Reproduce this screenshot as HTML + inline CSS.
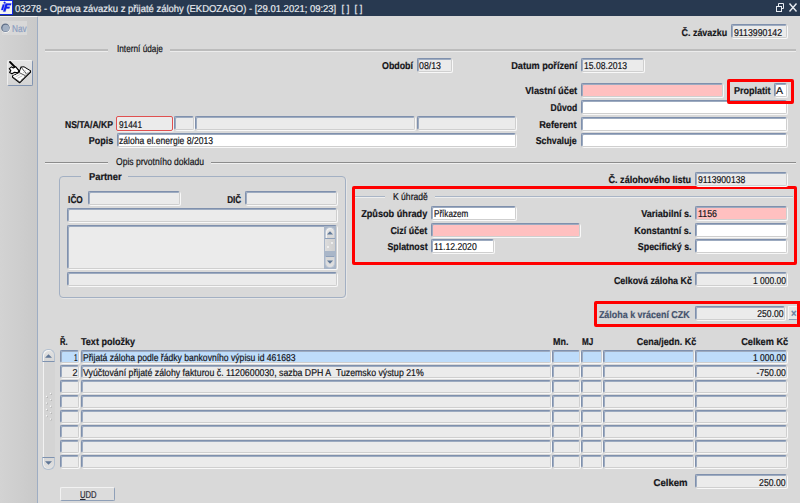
<!DOCTYPE html>
<html><head><meta charset="utf-8"><style>
html,body{margin:0;padding:0;width:800px;height:503px;overflow:hidden;background:#d9d9d9;font-family:"Liberation Sans", sans-serif;}
body>div,body>svg{position:absolute;}
.t{white-space:nowrap;text-rendering:geometricPrecision;-webkit-text-stroke:0.2px currentColor;}
.f{border-top:1px solid #7f90ad;border-left:1px solid #7f90ad;border-right:1px solid #cfcfcf;border-bottom:1px solid #cfcfcf;border-radius:2px;box-shadow:1px 1px 0 #f8f8f8, inset 1px 1px 0 #9dabc0;}
</style></head><body>
<div style="left:0px;top:0px;width:800px;height:16px;background:#283950"></div>
<svg style="left:0;top:0" width="14" height="16" viewBox="0 0 14 16"><rect x="0" y="0" width="13" height="15" fill="#1428e6"/><rect x="0" y="1" width="12" height="13" fill="#f4f4ee"/><g fill="#1020f0" stroke="#1020f0" stroke-width="0.3" stroke-linejoin="round"><circle cx="4.6" cy="2.6" r="0.9"/><path d="M1.2 10 L3 10 L4.6 4.4 L2.8 4.4 Z"/><path d="M3.2 11.6 L5.4 11.6 L6.3 8.4 L9.3 8.4 L9.8 6.8 L6.8 6.8 L7.3 5.2 L10.8 5.2 L11.3 3.5 L5.6 3.5 Z"/></g></svg>
<svg style="left:774px;top:2px" width="24" height="11" viewBox="0 0 24 11"><g fill="none" stroke="#e8ecf2" stroke-width="1"><rect x="2.5" y="4.5" width="5" height="5"/><path d="M4.5 4.5V1.5h5v5h-2"/><path d="M15.5 1.5l7 8M22.5 1.5l-7 8" stroke-width="1.4"/></g></svg>
<div style="left:0px;top:16px;width:37px;height:487px;background:linear-gradient(90deg,#d3d3d3,#c9c9c9)"></div>
<div style="left:0px;top:16px;width:37px;height:1px;background:#f2f2f2"></div>
<div style="left:37px;top:17px;width:1px;height:486px;background:#9eadc3"></div>
<div style="left:2px;top:21px;width:25px;height:14px;background:#d8d8d8"></div>
<svg style="left:0;top:22px" width="12" height="12"><circle cx="5.8" cy="6.3" r="4.6" fill="#f2f2f2"/><circle cx="5.4" cy="5.8" r="4.3" fill="#5f6e86"/><circle cx="5.8" cy="6.2" r="3.4" fill="#a2b0c3"/></svg>
<div style="left:7px;top:60px;width:24px;height:24px;border:1px solid #eeeeee;border-right-color:#8294b0;border-bottom-color:#8294b0;border-radius:2px;background:linear-gradient(#e4e4e4,#d4d4d4)"></div>
<div style="left:7px;top:60px"><svg width="26" height="26" viewBox="0 0 26 26" style="display:block"><g stroke="#000" stroke-linejoin="round" stroke-linecap="round"><path d="M5.5 16 L12 12.5 L14 7 L17 6.8 L23.2 10.6 L12.8 21.2 Z" fill="#fff" stroke-width="1"/><path d="M5.5 16 L5.6 17.3 L12.6 22.8 L23.6 12 L23.2 10.6" fill="#fff" stroke-width="1.1"/><path d="M6.5 17.5 L12.7 21.9 L23 11.6" fill="none" stroke="#444" stroke-width="0.7" stroke-dasharray="0.8 0.6"/><path d="M12 12.5 L18 15.5 M14 7 L19.5 14" fill="none" stroke="#222" stroke-width="0.8"/><path d="M9 16.5 L13 14.5 M11 18 L15 16 M16.5 12.5 L19 10.5 M18 14.5 L21 12" fill="none" stroke="#aaa" stroke-width="0.7"/><path d="M3 2 L12.2 11.3" stroke-width="1.8" fill="none"/><path d="M2.3 8.6 L4.6 6.9 L6.3 8 L8.6 6.7 L12 10.8 L10.8 12.8 L7.5 12.3 L5 13.8 L2.6 12.4 L3.8 10.6 Z" fill="#fff" stroke-width="1.1"/></g></svg></div>
<div class="f" style="left:731px;top:24px;width:54px;height:12px;background:#ebebeb;"></div>
<div style="left:45px;top:49px;width:63px;height:2px;background:#bcbcbc"></div>
<div style="left:45px;top:51px;width:63px;height:1px;background:#ececec"></div>
<div style="left:170px;top:49px;width:626px;height:2px;background:#bcbcbc"></div>
<div style="left:170px;top:51px;width:626px;height:1px;background:#ececec"></div>
<div class="f" style="left:417px;top:58px;width:33px;height:12px;background:#ebebeb;"></div>
<div class="f" style="left:581px;top:58px;width:61px;height:12px;background:#ebebeb;"></div>
<div class="f" style="left:581px;top:83px;width:140px;height:12px;background:#ffc0c0;"></div>
<div class="f" style="left:581px;top:100px;width:204px;height:12px;background:#ffffff;"></div>
<div class="f" style="left:581px;top:117px;width:204px;height:12px;background:#ffffff;"></div>
<div class="f" style="left:581px;top:133px;width:204px;height:12px;background:#ffffff;"></div>
<div style="left:727px;top:79px;width:61px;height:19px;border:3px solid #ff0000;border-radius:2px"></div>
<div class="f" style="left:774px;top:83px;width:11px;height:12px;background:#ffffff;"></div>
<div style="left:116px;top:116px;width:55px;height:13px;background:#ebebeb;border:1px solid #e05050;border-radius:2px;box-shadow:1px 1px 0 #f0f0f0"></div>
<div class="f" style="left:174px;top:116px;width:18px;height:12px;background:#ebebeb;"></div>
<div class="f" style="left:195px;top:116px;width:218px;height:12px;background:#ebebeb;"></div>
<div class="f" style="left:417px;top:116px;width:97px;height:12px;background:#ebebeb;"></div>
<div class="f" style="left:117px;top:133px;width:397px;height:12px;background:#ffffff;"></div>
<div style="left:45px;top:162px;width:63px;height:1px;background:#8c8c8c"></div>
<div style="left:45px;top:163px;width:63px;height:1px;background:#f0f0f0"></div>
<div style="left:211px;top:162px;width:585px;height:1px;background:#8c8c8c"></div>
<div style="left:211px;top:163px;width:585px;height:1px;background:#f0f0f0"></div>
<div style="left:59px;top:176px;width:285px;height:120px;border:1px solid #a3b0c3;border-radius:4px;box-shadow:1px 1px 0 #e6e6e6"></div>
<div style="left:81px;top:170px;width:47px;height:10px;background:#d9d9d9"></div>
<div class="f" style="left:88px;top:191px;width:90px;height:12px;background:#ebebeb;"></div>
<div class="f" style="left:245px;top:191px;width:90px;height:12px;background:#ebebeb;"></div>
<div class="f" style="left:67px;top:208px;width:268px;height:12px;background:#ebebeb;"></div>
<div class="f" style="left:67px;top:225px;width:268px;height:42px;background:#ebebeb;"></div>
<div class="f" style="left:67px;top:272px;width:268px;height:12px;background:#ebebeb;"></div>
<div style="left:324px;top:226px;width:12px;height:43px;background:#a9b6c8"></div>
<div style="left:325px;top:227px;width:10px;height:11px;background:linear-gradient(#e6e6e6,#d6d6d6);border:1px solid #c0c9d6;border-bottom:0;border-radius:5px 5px 0 0;box-sizing:border-box;box-shadow:inset 1px 1px 0 #f4f4f4"></div>
<svg style="left:327px;top:231px" width="6" height="4"><path d="M0 3.5L3 0.3 6 3.5z" fill="#5f7898"/></svg>
<div style="left:325px;top:238px;width:10px;height:13px;background:linear-gradient(90deg,#dcdcdc,#cfcfcf);border-top:1px solid #8ea0ba;box-sizing:border-box"></div>
<svg style="left:326px;top:241px" width="8" height="8"><circle cx="6" cy="2" r="0.9" fill="#fafafa"/><circle cx="2" cy="6" r="0.9" fill="#fafafa"/></svg>
<div style="left:325px;top:256px;width:10px;height:12px;background:linear-gradient(#d6d6d6,#e2e2e2);border:1px solid #c0c9d6;border-top:1px solid #8ea0ba;border-radius:0 0 5px 5px;box-sizing:border-box"></div>
<svg style="left:327px;top:260px" width="6" height="4"><path d="M0 0.5L3 3.7 6 0.5z" fill="#5f7898"/></svg>
<div style="left:352px;top:186px;width:439px;height:73px;border:3px solid #ff0000;border-radius:2px"></div>
<div style="left:355px;top:196px;width:30px;height:1px;background:#a9b5c6"></div>
<div style="left:355px;top:197px;width:30px;height:1px;background:#eeeeee"></div>
<div style="left:435px;top:196px;width:358px;height:1px;background:#a9b5c6"></div>
<div style="left:435px;top:197px;width:358px;height:1px;background:#eeeeee"></div>
<div class="f" style="left:431px;top:206px;width:83px;height:12px;background:#ffffff;"></div>
<div class="f" style="left:431px;top:223px;width:147px;height:12px;background:#ffc0c0;"></div>
<div class="f" style="left:431px;top:239px;width:61px;height:12px;background:#ffffff;"></div>
<div class="f" style="left:695px;top:172px;width:90px;height:12px;background:#ebebeb;"></div>
<div class="f" style="left:695px;top:206px;width:90px;height:12px;background:#ffc0c0;"></div>
<div class="f" style="left:695px;top:223px;width:90px;height:12px;background:#ffffff;"></div>
<div class="f" style="left:695px;top:239px;width:90px;height:12px;background:#ffffff;"></div>
<div class="f" style="left:695px;top:272px;width:90px;height:12px;background:#ebebeb;"></div>
<div style="left:594px;top:301px;width:200px;height:20px;border:3px solid #ff0000;border-radius:2px 0 0 2px"></div>
<div class="f" style="left:695px;top:306px;width:88px;height:12px;background:#ebebeb;"></div>
<div style="left:788px;top:306px;width:8px;height:12px;background:#e6e6e6;border-left:1px solid #f6f6f6;border-top:1px solid #f6f6f6;border-bottom:1px solid #8a9cb6;border-radius:1px"></div>
<div class="f" style="left:60px;top:350px;width:17px;height:11px;background:#bedcfa;"></div>
<div class="f" style="left:81px;top:350px;width:468px;height:11px;background:#bedcfa;"></div>
<div class="f" style="left:552px;top:350px;width:26px;height:11px;background:#bedcfa;"></div>
<div class="f" style="left:581px;top:350px;width:19px;height:11px;background:#bedcfa;"></div>
<div class="f" style="left:603px;top:350px;width:89px;height:11px;background:#bedcfa;"></div>
<div class="f" style="left:695px;top:350px;width:90px;height:11px;background:#bedcfa;"></div>
<div class="f" style="left:60px;top:365px;width:17px;height:11px;background:#ebebeb;"></div>
<div class="f" style="left:81px;top:365px;width:468px;height:11px;background:#ebebeb;"></div>
<div class="f" style="left:552px;top:365px;width:26px;height:11px;background:#ebebeb;"></div>
<div class="f" style="left:581px;top:365px;width:19px;height:11px;background:#ebebeb;"></div>
<div class="f" style="left:603px;top:365px;width:89px;height:11px;background:#ebebeb;"></div>
<div class="f" style="left:695px;top:365px;width:90px;height:11px;background:#ebebeb;"></div>
<div class="f" style="left:60px;top:380px;width:17px;height:11px;background:#ebebeb;"></div>
<div class="f" style="left:81px;top:380px;width:468px;height:11px;background:#ebebeb;"></div>
<div class="f" style="left:552px;top:380px;width:26px;height:11px;background:#ebebeb;"></div>
<div class="f" style="left:581px;top:380px;width:19px;height:11px;background:#ebebeb;"></div>
<div class="f" style="left:603px;top:380px;width:89px;height:11px;background:#ebebeb;"></div>
<div class="f" style="left:695px;top:380px;width:90px;height:11px;background:#ebebeb;"></div>
<div class="f" style="left:60px;top:395px;width:17px;height:11px;background:#ebebeb;"></div>
<div class="f" style="left:81px;top:395px;width:468px;height:11px;background:#ebebeb;"></div>
<div class="f" style="left:552px;top:395px;width:26px;height:11px;background:#ebebeb;"></div>
<div class="f" style="left:581px;top:395px;width:19px;height:11px;background:#ebebeb;"></div>
<div class="f" style="left:603px;top:395px;width:89px;height:11px;background:#ebebeb;"></div>
<div class="f" style="left:695px;top:395px;width:90px;height:11px;background:#ebebeb;"></div>
<div class="f" style="left:60px;top:410px;width:17px;height:11px;background:#ebebeb;"></div>
<div class="f" style="left:81px;top:410px;width:468px;height:11px;background:#ebebeb;"></div>
<div class="f" style="left:552px;top:410px;width:26px;height:11px;background:#ebebeb;"></div>
<div class="f" style="left:581px;top:410px;width:19px;height:11px;background:#ebebeb;"></div>
<div class="f" style="left:603px;top:410px;width:89px;height:11px;background:#ebebeb;"></div>
<div class="f" style="left:695px;top:410px;width:90px;height:11px;background:#ebebeb;"></div>
<div class="f" style="left:60px;top:425px;width:17px;height:11px;background:#ebebeb;"></div>
<div class="f" style="left:81px;top:425px;width:468px;height:11px;background:#ebebeb;"></div>
<div class="f" style="left:552px;top:425px;width:26px;height:11px;background:#ebebeb;"></div>
<div class="f" style="left:581px;top:425px;width:19px;height:11px;background:#ebebeb;"></div>
<div class="f" style="left:603px;top:425px;width:89px;height:11px;background:#ebebeb;"></div>
<div class="f" style="left:695px;top:425px;width:90px;height:11px;background:#ebebeb;"></div>
<div class="f" style="left:60px;top:440px;width:17px;height:11px;background:#ebebeb;"></div>
<div class="f" style="left:81px;top:440px;width:468px;height:11px;background:#ebebeb;"></div>
<div class="f" style="left:552px;top:440px;width:26px;height:11px;background:#ebebeb;"></div>
<div class="f" style="left:581px;top:440px;width:19px;height:11px;background:#ebebeb;"></div>
<div class="f" style="left:603px;top:440px;width:89px;height:11px;background:#ebebeb;"></div>
<div class="f" style="left:695px;top:440px;width:90px;height:11px;background:#ebebeb;"></div>
<div class="f" style="left:60px;top:455px;width:17px;height:11px;background:#ebebeb;"></div>
<div class="f" style="left:81px;top:455px;width:468px;height:11px;background:#ebebeb;"></div>
<div class="f" style="left:552px;top:455px;width:26px;height:11px;background:#ebebeb;"></div>
<div class="f" style="left:581px;top:455px;width:19px;height:11px;background:#ebebeb;"></div>
<div class="f" style="left:603px;top:455px;width:89px;height:11px;background:#ebebeb;"></div>
<div class="f" style="left:695px;top:455px;width:90px;height:11px;background:#ebebeb;"></div>
<div style="left:43px;top:361px;width:12px;height:97px;background:#d4d4d4;border-left:1px solid #f2f2f2;box-sizing:border-box"></div>
<div style="left:42px;top:349px;width:13px;height:13px;background:linear-gradient(#e2e2e2,#d6d6d6);border:1px solid #b3c0d0;border-bottom:1px solid #7f93b0;border-radius:6px 6px 0 0;box-sizing:border-box;box-shadow:inset 1px 1px 0 #f4f4f4"></div>
<svg style="left:45px;top:354px" width="7" height="4"><path d="M0 3.8L3.5 0.2 7 3.8z" fill="#5f7696"/></svg>
<div style="left:42px;top:457px;width:13px;height:13px;background:linear-gradient(#d6d6d6,#e2e2e2);border:1px solid #b3c0d0;border-top:1px solid #7f93b0;border-radius:0 0 6px 6px;box-sizing:border-box;box-shadow:inset 1px 0 0 #f4f4f4"></div>
<svg style="left:45px;top:461px" width="7" height="4"><path d="M0 0.2L3.5 3.8 7 0.2z" fill="#5f7696"/></svg>
<svg style="left:0;top:0" width="60" height="430"><circle cx="51" cy="394" r="0.9" fill="#a9a9a9"/><circle cx="50.6" cy="393.6" r="0.8" fill="#fbfbfb"/><circle cx="47" cy="397" r="0.9" fill="#a9a9a9"/><circle cx="46.6" cy="396.6" r="0.8" fill="#fbfbfb"/><circle cx="51" cy="400.2" r="0.9" fill="#a9a9a9"/><circle cx="50.6" cy="399.8" r="0.8" fill="#fbfbfb"/><circle cx="47" cy="403.5" r="0.9" fill="#a9a9a9"/><circle cx="46.6" cy="403.1" r="0.8" fill="#fbfbfb"/><circle cx="51" cy="406.8" r="0.9" fill="#a9a9a9"/><circle cx="50.6" cy="406.40000000000003" r="0.8" fill="#fbfbfb"/><circle cx="47" cy="410" r="0.9" fill="#a9a9a9"/><circle cx="46.6" cy="409.6" r="0.8" fill="#fbfbfb"/><circle cx="51" cy="413.2" r="0.9" fill="#a9a9a9"/><circle cx="50.6" cy="412.8" r="0.8" fill="#fbfbfb"/><circle cx="47" cy="416.3" r="0.9" fill="#a9a9a9"/><circle cx="46.6" cy="415.90000000000003" r="0.8" fill="#fbfbfb"/><circle cx="51" cy="419.5" r="0.9" fill="#a9a9a9"/><circle cx="50.6" cy="419.1" r="0.8" fill="#fbfbfb"/></svg>
<div class="f" style="left:695px;top:474px;width:90px;height:12px;background:#ebebeb;"></div>
<div style="left:60px;top:487px;width:53px;height:12px;background:#dcdcdc;border:1px solid #f2f2f2;border-right:1px solid #8fa0b8;border-bottom:1px solid #8fa0b8;border-radius:2px"></div>
<div class='t' style='left:14.50px;transform-origin:0 0;top:5.00px;font-weight:normal;font-size:10px;color:#e6e9ee;line-height:10px;transform:scaleX(0.9458);'>03278 - Oprava závazku z přijaté zálohy (EKDOZAGO) - [29.01.2021; 09:23]&nbsp; [ ]&nbsp; [ ]</div>
<div class='t' style='left:12.40px;transform-origin:0 0;top:25.00px;font-weight:normal;font-size:10px;color:#8a9cc0;line-height:10px;transform:scaleX(0.8204);'>Nav</div>
<div class='t' style='left:675.86px;transform-origin:100% 0;top:29.00px;font-weight:bold;font-size:10px;color:#141418;line-height:10px;transform:scaleX(0.8917);'>Č. závazku</div>
<div class='t' style='left:733.50px;transform-origin:0 0;top:29.00px;font-weight:normal;font-size:10px;color:#141418;line-height:10px;transform:scaleX(0.8747);'>9113990142</div>
<div class='t' style='left:116.50px;transform-origin:0 0;top:45.00px;font-weight:normal;font-size:10px;color:#141418;line-height:10px;transform:scaleX(0.8236);'>Interní údaje</div>
<div class='t' style='left:378.00px;transform-origin:100% 0;top:62.00px;font-weight:bold;font-size:10px;color:#141418;line-height:10px;transform:scaleX(0.8857);'>Období</div>
<div class='t' style='left:418.80px;transform-origin:0 0;top:62.00px;font-weight:normal;font-size:10px;color:#141418;line-height:10px;transform:scaleX(0.8789);'>08/13</div>
<div class='t' style='left:504.77px;transform-origin:100% 0;top:62.00px;font-weight:bold;font-size:10px;color:#141418;line-height:10px;transform:scaleX(0.9137);'>Datum pořízení</div>
<div class='t' style='left:583.50px;transform-origin:0 0;top:62.00px;font-weight:normal;font-size:10px;color:#141418;line-height:10px;transform:scaleX(0.8589);'>15.08.2013</div>
<div class='t' style='left:521.46px;transform-origin:100% 0;top:87.00px;font-weight:bold;font-size:10px;color:#141418;line-height:10px;transform:scaleX(0.9262);'>Vlastní účet</div>
<div class='t' style='left:545.89px;transform-origin:100% 0;top:104.00px;font-weight:bold;font-size:10px;color:#141418;line-height:10px;transform:scaleX(0.8550);'>Důvod</div>
<div class='t' style='left:536.42px;transform-origin:100% 0;top:121.00px;font-weight:bold;font-size:10px;color:#141418;line-height:10px;transform:scaleX(0.9217);'>Referent</div>
<div class='t' style='left:530.30px;transform-origin:100% 0;top:137.00px;font-weight:bold;font-size:10px;color:#141418;line-height:10px;transform:scaleX(0.8779);'>Schvaluje</div>
<div class='t' style='left:729.84px;transform-origin:100% 0;top:87.00px;font-weight:bold;font-size:10px;color:#141418;line-height:10px;transform:scaleX(0.9023);'>Proplatit</div>
<div class='t' style='left:776.00px;transform-origin:0 0;top:87.00px;font-weight:normal;font-size:10px;color:#141418;line-height:10px;transform:scaleX(1.0492);'>A</div>
<div class='t' style='left:57.06px;transform-origin:100% 0;top:121.00px;font-weight:bold;font-size:10px;color:#141418;line-height:10px;transform:scaleX(0.8581);'>NS/TA/A/KP</div>
<div class='t' style='left:119.00px;transform-origin:0 0;top:121.00px;font-weight:normal;font-size:10px;color:#141418;line-height:10px;transform:scaleX(0.8270);'>91441</div>
<div class='t' style='left:85.77px;transform-origin:100% 0;top:137.00px;font-weight:bold;font-size:10px;color:#141418;line-height:10px;transform:scaleX(0.8959);'>Popis</div>
<div class='t' style='left:119.00px;transform-origin:0 0;top:137.00px;font-weight:normal;font-size:10px;color:#141418;line-height:10px;transform:scaleX(0.8582);'>záloha el.energie 8/2013</div>
<div class='t' style='left:115.60px;transform-origin:0 0;top:158.00px;font-weight:normal;font-size:10px;color:#141418;line-height:10px;transform:scaleX(0.8557);'>Opis prvotního dokladu</div>
<div class='t' style='left:88.70px;transform-origin:0 0;top:173.00px;font-weight:bold;font-size:10px;color:#141418;line-height:10px;transform:scaleX(0.9310);'>Partner</div>
<div class='t' style='left:65.22px;transform-origin:100% 0;top:196.00px;font-weight:bold;font-size:10px;color:#141418;line-height:10px;transform:scaleX(0.8267);'>IČO</div>
<div class='t' style='left:223.77px;transform-origin:100% 0;top:196.00px;font-weight:bold;font-size:10px;color:#141418;line-height:10px;transform:scaleX(0.8123);'>DIČ</div>
<div class='t' style='left:392.60px;transform-origin:0 0;top:193.00px;font-weight:normal;font-size:10px;color:#141418;line-height:10px;transform:scaleX(0.8573);'>K úhradě</div>
<div class='t' style='left:354.97px;transform-origin:100% 0;top:210.00px;font-weight:bold;font-size:10px;color:#141418;line-height:10px;transform:scaleX(0.9151);'>Způsob úhrady</div>
<div class='t' style='left:433.80px;transform-origin:0 0;top:210.00px;font-weight:normal;font-size:10px;color:#141418;line-height:10px;transform:scaleX(0.8098);'>Příkazem</div>
<div class='t' style='left:386.07px;transform-origin:100% 0;top:227.00px;font-weight:bold;font-size:10px;color:#141418;line-height:10px;transform:scaleX(0.8924);'>Cizí účet</div>
<div class='t' style='left:381.64px;transform-origin:100% 0;top:243.00px;font-weight:bold;font-size:10px;color:#141418;line-height:10px;transform:scaleX(0.8801);'>Splatnost</div>
<div class='t' style='left:433.80px;transform-origin:0 0;top:243.00px;font-weight:normal;font-size:10px;color:#141418;line-height:10px;transform:scaleX(0.8659);'>11.12.2020</div>
<div class='t' style='left:600.08px;transform-origin:100% 0;top:176.00px;font-weight:bold;font-size:10px;color:#141418;line-height:10px;transform:scaleX(0.9064);'>Č. zálohového listu</div>
<div class='t' style='left:697.50px;transform-origin:0 0;top:176.00px;font-weight:normal;font-size:10px;color:#141418;line-height:10px;transform:scaleX(0.8620);'>9113900138</div>
<div class='t' style='left:635.61px;transform-origin:100% 0;top:210.00px;font-weight:bold;font-size:10px;color:#141418;line-height:10px;transform:scaleX(0.9066);'>Variabilní s.</div>
<div class='t' style='left:697.50px;transform-origin:0 0;top:210.00px;font-weight:normal;font-size:10px;color:#141418;line-height:10px;transform:scaleX(0.8831);'>1156</div>
<div class='t' style='left:627.86px;transform-origin:100% 0;top:227.00px;font-weight:bold;font-size:10px;color:#141418;line-height:10px;transform:scaleX(0.8999);'>Konstantní s.</div>
<div class='t' style='left:630.61px;transform-origin:100% 0;top:243.00px;font-weight:bold;font-size:10px;color:#141418;line-height:10px;transform:scaleX(0.8879);'>Specifický s.</div>
<div class='t' style='left:603.59px;transform-origin:100% 0;top:277.00px;font-weight:bold;font-size:10px;color:#141418;line-height:10px;transform:scaleX(0.8871);'>Celková záloha Kč</div>
<div class='t' style='left:746.66px;transform-origin:100% 0;top:277.00px;font-weight:normal;font-size:10px;color:#141418;line-height:10px;transform:scaleX(0.8475);'>1 000.00</div>
<div class='t' style='left:587.80px;transform-origin:100% 0;top:311.00px;font-weight:bold;font-size:10px;color:#44526c;line-height:10px;transform:scaleX(0.8928);'>Záloha k vrácení CZK</div>
<div class='t' style='left:753.41px;transform-origin:100% 0;top:310.00px;font-weight:normal;font-size:10px;color:#141418;line-height:10px;transform:scaleX(0.8597);'>250.00</div>
<div class='t' style='left:790.50px;transform-origin:0 0;top:309.00px;font-weight:bold;font-size:11px;color:#6a7fa0;line-height:10px;transform:scaleX(0.8544);'>×</div>
<div class='t' style='left:59.60px;transform-origin:0 0;top:338.00px;font-weight:bold;font-size:10px;color:#141418;line-height:10px;transform:scaleX(0.7600);'>Ř.</div>
<div class='t' style='left:80.80px;transform-origin:0 0;top:338.00px;font-weight:bold;font-size:10px;color:#141418;line-height:10px;transform:scaleX(0.9026);'>Text položky</div>
<div class='t' style='left:552.50px;transform-origin:0 0;top:338.00px;font-weight:bold;font-size:10px;color:#141418;line-height:10px;transform:scaleX(0.8944);'>Mn.</div>
<div class='t' style='left:581.75px;transform-origin:0 0;top:338.00px;font-weight:bold;font-size:10px;color:#141418;line-height:10px;transform:scaleX(0.8126);'>MJ</div>
<div class='t' style='left:629.76px;transform-origin:100% 0;top:338.00px;font-weight:bold;font-size:10px;color:#141418;line-height:10px;transform:scaleX(0.8966);'>Cena/jedn. Kč</div>
<div class='t' style='left:736.56px;transform-origin:100% 0;top:338.00px;font-weight:bold;font-size:10px;color:#141418;line-height:10px;transform:scaleX(0.9171);'>Celkem Kč</div>
<div class='t' style='left:71.74px;transform-origin:100% 0;top:354.00px;font-weight:normal;font-size:10px;color:#141418;line-height:10px;transform:scaleX(0.6472);'>1</div>
<div class='t' style='left:83.00px;transform-origin:0 0;top:354.00px;font-weight:normal;font-size:10px;color:#141418;line-height:10px;transform:scaleX(0.8590);'>Přijatá záloha podle řádky bankovního výpisu id 461683</div>
<div class='t' style='left:746.66px;transform-origin:100% 0;top:354.00px;font-weight:normal;font-size:10px;color:#141418;line-height:10px;transform:scaleX(0.8475);'>1 000.00</div>
<div class='t' style='left:71.74px;transform-origin:100% 0;top:369.00px;font-weight:normal;font-size:10px;color:#141418;line-height:10px;transform:scaleX(0.8989);'>2</div>
<div class='t' style='left:83.00px;transform-origin:0 0;top:369.00px;font-weight:normal;font-size:10px;color:#141418;line-height:10px;transform:scaleX(0.8771);'>Vyúčtování přijaté zálohy fakturou č. 1120600030, sazba DPH A&nbsp; Tuzemsko výstup 21%</div>
<div class='t' style='left:751.68px;transform-origin:100% 0;top:369.00px;font-weight:normal;font-size:10px;color:#141418;line-height:10px;transform:scaleX(0.8637);'>-750.00</div>
<div class='t' style='left:651.72px;transform-origin:100% 0;top:479.00px;font-weight:bold;font-size:10px;color:#141418;line-height:10px;transform:scaleX(0.9556);'>Celkem</div>
<div class='t' style='left:755.01px;transform-origin:100% 0;top:479.00px;font-weight:normal;font-size:10px;color:#141418;line-height:10px;transform:scaleX(0.8662);'>250.00</div>
<div class='t' style='left:79.50px;transform-origin:0 0;top:491.00px;font-weight:normal;font-size:10px;color:#2a2a34;line-height:10px;transform:scaleX(0.7654);'><u>U</u>DD</div>
</body></html>
